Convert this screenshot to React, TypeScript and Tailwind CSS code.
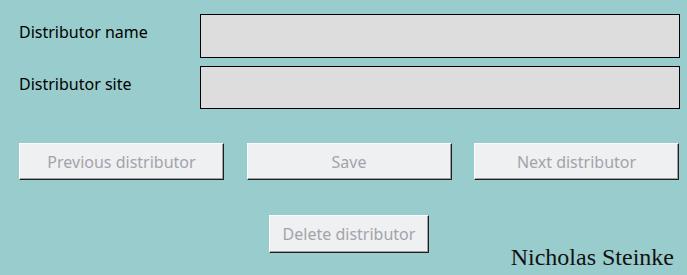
import React, { useState } from 'react';

const btn =
  "h-[37px] bg-[#eff0f1] border-t border-l border-t-white border-l-white border-b border-r border-b-[#1e1e1e] border-r-[#1e1e1e] shadow-[inset_-1px_-1px_0_#a0a0a0] text-[16px] text-[#a3a3ab] font-['Noto_Sans',sans-serif]";

const App: React.FC = () => {
  const [name, setName] = useState('');
  const [site, setSite] = useState('');
  return <div className="w-[687px] h-[275px] bg-[#99cccc] pl-[19px] pr-[7px] pt-[14px] font-['Noto_Sans',sans-serif] overflow-hidden">
      <div className="grid grid-cols-[181px_1fr] gap-y-[8px] items-center">
        <label className="text-[16px] text-black -mt-[8px]">Distributor name</label>
        <input value={name} onChange={e => setName(e.target.value)} className="h-[44px] bg-[#dddddd] border border-black outline-none px-2" />
        <label className="text-[16px] text-black -mt-[8px]">Distributor site</label>
        <input value={site} onChange={e => setSite(e.target.value)} className="h-[43px] bg-[#dddddd] border border-black outline-none px-2" />
      </div>
      <div className="mr-[1px] mt-[34px] flex justify-between">
        <button className={`${btn} w-[205px]`}>Previous distributor</button>
        <button className={`${btn} w-[205px]`}>Save</button>
        <button className={`${btn} w-[205px]`}>Next distributor</button>
      </div>
      <div className="mr-[1px] mt-[35px] grid grid-cols-[1fr_auto_1fr] items-start">
        <div />
        <button className={`${btn} w-[160px] h-[38px]`}>Delete distributor</button>
        <div className="flex justify-end pr-[5px] pt-[30px]">
          <span className="font-['Liberation_Serif',serif] text-[24px] leading-none text-[#111]">Nicholas Steinke</span>
        </div>
      </div>
    </div>;
};

export default App;
